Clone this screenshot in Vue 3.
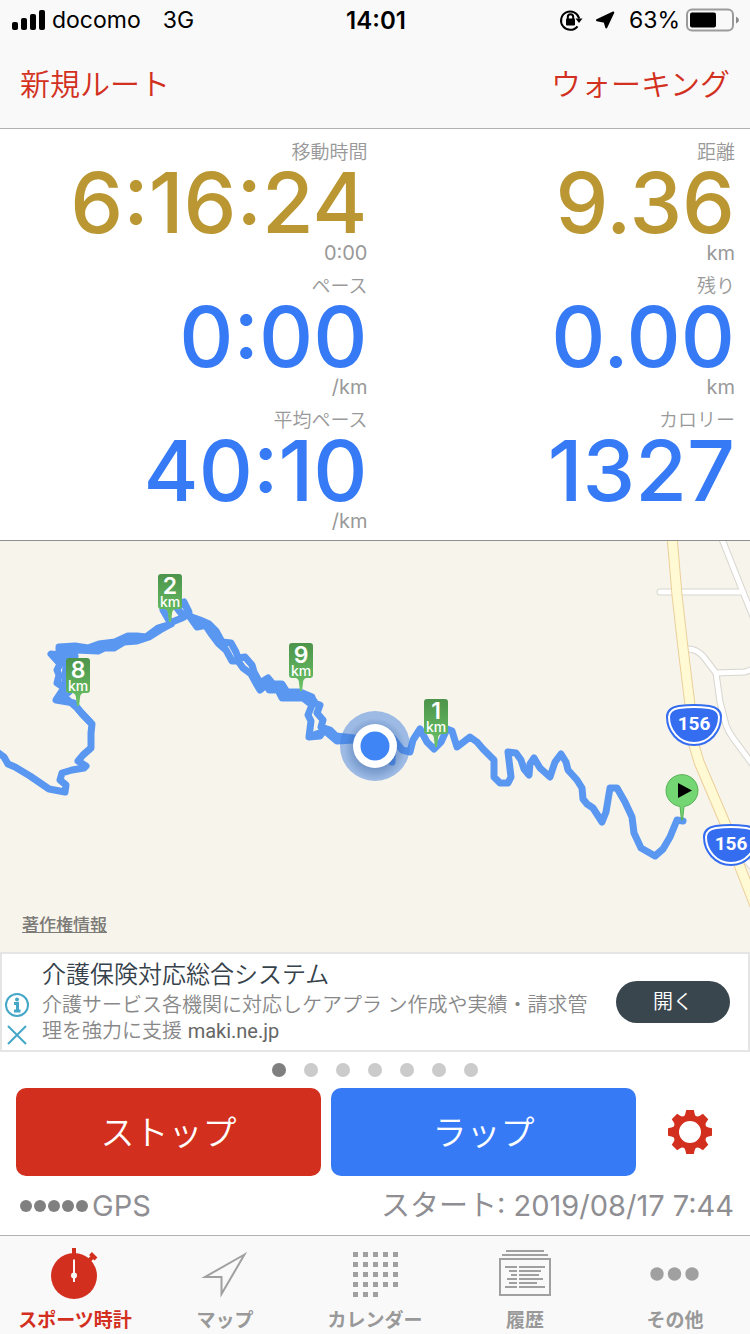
<template>
  <div class="workout-page">
    <header class="top-area">
      <div class="status-bar">
        <div class="status-left">
          <svg class="signal-icon" viewBox="0 0 34 20">
            <rect x="0" y="12" width="6" height="8" rx="2" />
            <rect x="9" y="8" width="6" height="12" rx="2" />
            <rect x="18" y="4" width="6" height="16" rx="2" />
            <rect x="27" y="0" width="6" height="20" rx="2" />
          </svg>
          <span>docomo</span>
          <span class="network">3G</span>
        </div>
        <div class="status-time">14:01</div>
        <div class="status-right">
          <svg class="lock-icon" viewBox="0 0 24 22">
            <path class="lock-ring" d="M18.5 17.3 A9.2 9.2 0 1 1 20.2 9.5" />
            <path d="M16.5 9.5 H23.5 L20 14 Z" />
            <rect x="7" y="9.5" width="9" height="7" rx="1" />
            <path class="lock-shackle" d="M8.8 10 V8 a2.7 2.7 0 0 1 5.4 0 V10" />
          </svg>
          <svg class="location-icon" viewBox="0 0 20 18">
            <path d="M18.3 1.5 L11.3 16.4 L9.6 10.7 L2 9.2 Z" />
          </svg>
          <span>63%</span>
          <svg class="battery-icon" viewBox="0 0 54 24">
            <rect class="battery-body" x="1" y="1.5" width="46" height="21" rx="5" />
            <rect x="4" y="4.5" width="26" height="15" rx="2" />
            <path class="battery-cap" d="M50 8.5 Q53 10 53 12 Q53 14 50 15.5 Z" />
          </svg>
        </div>
      </div>
      <nav class="nav-bar">
        <a href="#">新規ルート</a>
        <a href="#">ウォーキング</a>
      </nav>
    </header>

    <section class="metrics">
      <div v-for="item in metrics" :key="item.label" class="metric">
        <div class="metric-label">{{ item.label }}</div>
        <div :class="['metric-value', item.color]">{{ item.value }}</div>
        <div class="metric-unit">{{ item.unit }}</div>
      </div>
    </section>

    <section class="map-area">
      <svg class="map" viewBox="0 541 750 411">
        <defs>
          <linearGradient id="pinFill" x1="0" y1="0" x2="0" y2="1">
            <stop offset="0" stop-color="#4c944b" />
            <stop offset="1" stop-color="#6cc368" />
          </linearGradient>
          <radialGradient id="dotShadow">
            <stop offset="0.6" stop-color="#2f5b9c" stop-opacity="0.4" />
            <stop offset="1" stop-color="#2f5b9c" stop-opacity="0" />
          </radialGradient>
        </defs>

        <path v-for="(road, i) in sideRoads" :key="'a' + i" class="road-edge" :d="road" />
        <path v-for="(road, i) in sideRoads" :key="'b' + i" class="road" :d="road" />
        <path class="highway-edge" :d="highway" />
        <path class="highway" :d="highway" />

        <g v-for="shield in shields" :key="shield.y" :transform="`translate(${shield.x} ${shield.y})`">
          <path class="shield-outer" :d="shieldShape" />
          <path class="shield-inner" :d="shieldShape" />
          <text class="shield-text" y="5">156</text>
        </g>

        <path v-for="(line, i) in tracks" :key="'t' + i" class="track" :d="line" />

        <g v-for="pin in pins" :key="pin.km" :transform="`translate(${pin.x} ${pin.y})`">
          <path
            fill="url(#pinFill)"
            d="M-9 -48 H9 Q12 -48 12 -45 V-16 Q12 -13 9 -13 H5 Q2 -12 2 -8 L1 0 H-1 L-2 -8 Q-2 -12 -5 -13 H-9 Q-12 -13 -12 -16 V-45 Q-12 -48 -9 -48 Z"
          />
          <text class="pin-number" y="-28">{{ pin.km }}</text>
          <text class="pin-unit" y="-15">km</text>
        </g>

        <circle class="halo" cx="375" cy="746" r="35" />
        <circle cx="375" cy="749" r="31" fill="url(#dotShadow)" />
        <circle cx="375" cy="746" r="22" fill="#fff" />
        <circle cx="375" cy="746" r="14.5" fill="#4085f6" />

        <path class="start-pin" d="M680 806.5 A16 16 0 1 1 684 806.5 L682.5 820 H681.5 Z" />
        <path d="M678 783 L692 790.5 L678 798 Z" />
      </svg>
      <a class="map-credit" href="#">著作権情報</a>
    </section>

    <aside class="ad">
      <div class="ad-marks">
        <svg viewBox="0 0 24 24">
          <circle cx="12" cy="12" r="11" />
          <path class="info-stem" d="M9 10.5 H12.5 V18 M9 18 H15.5" />
          <circle class="info-dot" cx="12" cy="6.5" r="2" />
        </svg>
        <svg viewBox="0 0 24 24">
          <path d="M3 3 L21 21 M21 3 L3 21" />
        </svg>
      </div>
      <div class="ad-text">
        <div class="ad-title">介護保険対応総合システム</div>
        <div class="ad-desc">
          介護サービス各機関に対応しケアプラ ン作成や実績・請求管<br />理を強力に支援 <span class="ad-host">maki.ne.jp</span>
        </div>
      </div>
      <button class="ad-button" type="button">開く</button>
    </aside>

    <div class="page-dots">
      <span v-for="n in 7" :key="n" :class="['page-dot', { active: n === 1 }]"></span>
    </div>

    <div class="controls">
      <button class="control-button stop" type="button">ストップ</button>
      <button class="control-button lap" type="button">ラップ</button>
      <button class="settings-button" type="button" aria-label="設定">
        <svg viewBox="-22 -22 44 44">
          <circle class="gear-ring" r="14" />
          <path
            v-for="n in 8"
            :key="n"
            d="M-6.5 -15 Q-5 -16.5 -4.6 -18.5 L-3.8 -22 H3.8 L4.6 -18.5 Q5 -16.5 6.5 -15 Z"
            :transform="`rotate(${n * 45})`"
          />
        </svg>
      </button>
    </div>

    <div class="info-row">
      <div class="gps">
        <div class="gps-dots">
          <span v-for="n in 5" :key="n" class="gps-dot"></span>
        </div>
        <span>GPS</span>
      </div>
      <div>スタート: 2019/08/17 7:44</div>
    </div>

    <nav class="tab-bar">
      <a class="tab active" href="#">
        <svg class="tab-icon" viewBox="0 0 60 52">
          <circle cx="29" cy="28" r="23" />
          <rect x="27" y="0" width="4" height="6" />
          <path class="watch-button" d="M44 12.5 L48 8.5 M45.5 5.5 L51 11" />
          <path class="watch-hand" d="M29 11.5 V34" />
          <circle class="watch-hub" cx="29" cy="27.5" r="3" />
        </svg>
        <span>スポーツ時計</span>
      </a>
      <a class="tab" href="#">
        <svg class="tab-icon outline" viewBox="0 0 60 52">
          <path d="M49.5 6.5 L10 29 H26.5 V46 Z" />
        </svg>
        <span>マップ</span>
      </a>
      <a class="tab" href="#">
        <svg class="tab-icon" viewBox="0 0 60 52">
          <rect
            v-for="n in 23"
            :key="n"
            :x="8 + ((n - 1) % 5) * 10"
            :y="4 + Math.floor((n - 1) / 5) * 10"
            width="5"
            height="5"
          />
        </svg>
        <span>カレンダー</span>
      </a>
      <a class="tab" href="#">
        <svg class="tab-icon outline" viewBox="0 0 60 52">
          <rect x="5" y="11" width="50" height="36" />
          <path
            d="M11 3 H49 M7 7 H53 M10 19 H22 M24 19 H50 M14 23 H22 M24 23 H46 M16 27 H22 M24 27 H44 M12 31 H22 M24 31 H48 M14 35 H22 M24 35 H42 M10 39 H22 M24 39 H50"
          />
        </svg>
        <span>履歴</span>
      </a>
      <a class="tab" href="#">
        <svg class="tab-icon" viewBox="0 0 60 52">
          <circle cx="12" cy="26" r="6.7" />
          <circle cx="29.5" cy="26" r="6.7" />
          <circle cx="47" cy="26" r="6.7" />
        </svg>
        <span>その他</span>
      </a>
    </nav>
  </div>
</template>

<script setup>
const metrics = [
  { label: '移動時間', value: '6:16:24', unit: '0:00', color: 'gold' },
  { label: '距離', value: '9.36', unit: 'km', color: 'gold' },
  { label: 'ペース', value: '0:00', unit: '/km', color: 'blue' },
  { label: '残り', value: '0.00', unit: 'km', color: 'blue' },
  { label: '平均ペース', value: '40:10', unit: '/km', color: 'blue' },
  { label: 'カロリー', value: '1327', unit: '', color: 'blue' }
]

const pins = [
  { km: 2, x: 170, y: 622 },
  { km: 8, x: 78, y: 706 },
  { km: 9, x: 301, y: 691 },
  { km: 1, x: 436, y: 747 }
]

const shields = [
  { x: 694, y: 725 },
  { x: 731, y: 845 }
]

const shieldShape =
  'M0 18 C-15 18 -25 5 -25 -8 C-25 -14 -21 -16 -15 -17 Q0 -19 15 -17 C21 -16 25 -14 25 -8 C25 5 15 18 0 18 Z'

const highway = 'M672 536 L677 595 L683 648 L690 705 L694 745 L699 762 L725 823 L738 862 L756 908'

const sideRoads = [
  'M720 534 L743 592 L756 624',
  'M660 592 H743',
  'M687 649 Q695 648 703 656 L716 673 L745 672 L756 668',
  'M716 673 L720 702 L726 725 Q728 731 733 738 L756 769',
  'M738 852 L756 871'
]

// outbound and return legs overlap, so the route is kept as several lines
const tracks = [
  'M-4 751 L4 757 L8 764 L15 767 L30 776 L49 789 L65 792 L66 785 L60 780 L62 773 L72 770 L84 768 L86 766 L78 761 L83 755 L91 748 L91 733 L92 724 L82 714 L74 703 L56 700 L64 688 L57 683 L59 675 L57 670 L60 664 L51 654 L59 655 L75 656 L74 664',
  'M90 722 L77 708 L68 700 L62 697 L69 692 L67 664 L60 658 M64 692 L66 665',
  'M59 656 L59 647 L75 646 L88 648 L99 644 L115 642 L128 636 L137 636 L146 637 L158 628 L171 624 L163 610',
  'M60 652 L76 650 L98 651 L104 648 L114 648 L124 642 L137 641 L149 637 L160 630 L171 624',
  'M172 622 L182 618 L189 612 L184 602 L177 608 L184 617 M184 602 L190 617 L197 627 L207 625 L212 632',
  'M186 615 L200 620 L209 624 L216 631 L222 642 L231 643 L236 652 L238 658 L245 657 L252 665 L254 672 L260 683 L268 678 L273 684 L282 684 L287 692 L300 692 L312 697 L314 703 L320 705 L317 713 L323 720 L321 727 L330 730 L336 736 L354 738 L380 740',
  'M204 623 L212 635 L218 643 L226 650 L232 661 L238 661 L243 668 L251 674 L257 685 L260 690 L267 684 L269 690 L278 690 L282 698 L297 698 L303 698 L312 705 L308 715 L311 721 L309 737 L320 736 L324 730 L337 741 L354 740',
  'M212 628 L220 642 L224 646 M256 678 L264 686 M272 687 L284 691 M284 695 L304 695 L314 701 M316 734 L326 731 L340 739',
  'M392 762 L393 738 L402 750 L410 752 L413 740 L420 729 L427 742 L434 749 L441 742 L447 729 L452 731 L457 747 L470 737 L477 742 L483 749 L494 760 L494 777 L500 783 L508 783 L511 777 L508 752 L516 753 L521 760 L524 769 L529 775 L530 764 L534 758 L540 768 L550 777 L555 762 L561 754 L566 762 L568 770 L577 780 L582 788 L583 799 L587 804 L593 808 L602 822 L606 812 L610 788 L617 788 L625 802 L632 817 L634 833 L641 848 L655 856 L663 849 L670 837 L677 820 L683 821'
]
</script>

<style>
body {
  background: #fff;
}
</style>

<style scoped>
.workout-page {
  display: flex;
  flex-direction: column;
  min-height: 100vh;
  font-family: Inter, "Noto Sans CJK JP", sans-serif;
  background: #fff;
}

a {
  color: inherit;
  text-decoration: none;
}

button {
  padding: 0;
  border: 0;
  font-family: inherit;
  cursor: pointer;
}

.top-area {
  background: #f9f9f9;
  border-bottom: 1px solid #b2b2b2;
}

.status-bar {
  display: grid;
  grid-template-columns: 1fr auto 1fr;
  align-items: center;
  height: 40px;
  padding: 0 10px 0 12px;
  font-size: 23px;
  color: #000;
}

.status-left,
.status-right {
  display: flex;
  align-items: center;
}

.status-right {
  justify-content: flex-end;
}

.status-time {
  font-size: 24px;
  font-weight: 600;
}

.signal-icon {
  width: 34px;
  height: 20px;
  margin-right: 6px;
}

.network {
  margin-left: 22px;
}

.lock-icon {
  width: 24px;
  height: 22px;
  margin-right: 12px;
}

.lock-ring,
.lock-shackle {
  fill: none;
  stroke: #000;
  stroke-width: 2;
}

.location-icon {
  width: 20px;
  height: 18px;
  margin-right: 14px;
  stroke: #000;
  stroke-width: 2;
  stroke-linejoin: round;
}

.battery-icon {
  width: 54px;
  height: 24px;
  margin-left: 6px;
}

.battery-body {
  fill: none;
  stroke: #9b9b9b;
  stroke-width: 2;
}

.battery-cap {
  fill: #8a8a8a;
}

.nav-bar {
  display: flex;
  align-items: center;
  justify-content: space-between;
  height: 84px;
  padding: 0 20px 4px;
  font-size: 30px;
  font-weight: 350;
  color: #d23020;
}

.metrics {
  display: grid;
  grid-template-columns: 1fr 1fr;
  row-gap: 14px;
  padding: 14px 15px 9px 0;
  text-align: right;
  border-bottom: 1px solid #8e8e8e;
}

.metric-label,
.metric-unit {
  height: 20px;
  line-height: 20px;
  color: #999;
}

.metric-label {
  font-size: 19px;
  font-weight: 350;
}

.metric-unit {
  font-size: 20px;
  font-weight: 400;
}

.metric-value {
  height: 80px;
  line-height: 80px;
  font-size: 84px;
  font-weight: 500;
}

.metric-value.gold {
  color: #ba9733;
}

.metric-value.blue {
  color: #367af6;
}

.map-area {
  position: relative;
  background: #f7f4ec;
}

.map {
  display: block;
  width: 100%;
}

.road-edge,
.road,
.highway-edge,
.highway,
.track {
  fill: none;
  stroke-linecap: round;
  stroke-linejoin: round;
}

.road-edge {
  stroke: #d8d5cf;
  stroke-width: 7;
}

.road {
  stroke: #fff;
  stroke-width: 5;
}

.highway-edge {
  stroke: #ebcf9a;
  stroke-width: 11;
}

.highway {
  stroke: #fffad3;
  stroke-width: 9;
}

.track {
  stroke: #5a97f1;
  stroke-width: 7;
}

.shield-outer {
  fill: #356df0;
  stroke: #356df0;
  stroke-width: 6;
}

.shield-inner {
  fill: #356df0;
  stroke: #fff;
  stroke-width: 2;
}

.shield-text,
.pin-number,
.pin-unit {
  fill: #fff;
  text-anchor: middle;
}

.shield-text {
  font-family: Roboto, sans-serif;
  font-size: 19px;
  font-weight: 700;
}

.pin-number {
  font-size: 23px;
  font-weight: 600;
}

.pin-unit {
  font-size: 14px;
  font-weight: 500;
}

.halo {
  fill: #4280dc;
  fill-opacity: 0.5;
}

.start-pin {
  fill: #74d672;
  stroke: #55b156;
}

.map-credit {
  position: absolute;
  left: 22px;
  bottom: 15px;
  font-size: 17px;
  line-height: 24px;
  font-weight: 500;
  color: #7c7a76;
  text-decoration: underline;
}

.ad {
  display: flex;
  align-items: center;
  height: 96px;
  padding-right: 18px;
  background: #fff;
  border: 2px solid #e5e5e5;
}

.ad-marks {
  display: flex;
  flex-direction: column;
  gap: 6px;
  align-self: flex-end;
  padding: 0 13px 3px 3px;
}

.ad-marks svg {
  width: 24px;
  height: 24px;
  fill: none;
  stroke: #45a7c8;
  stroke-width: 2;
}

.ad-marks .info-stem {
  stroke-width: 3;
}

.ad-marks .info-dot {
  fill: #45a7c8;
  stroke: none;
}

.ad-text {
  flex: 1;
  padding-bottom: 2px;
}

.ad-title {
  font-size: 24px;
  line-height: 34px;
  font-weight: 350;
  color: #36424b;
}

.ad-desc {
  font-size: 20px;
  line-height: 26px;
  font-weight: 350;
  color: #888;
}

.ad-host {
  font-family: Roboto, sans-serif;
  font-weight: 400;
  color: #666;
}

.ad-button {
  width: 114px;
  height: 42px;
  padding-bottom: 4px;
  font-size: 20px;
  font-weight: 350;
  color: #fff;
  background: #3a464e;
  border-radius: 21px;
}

.page-dots {
  display: flex;
  align-items: center;
  justify-content: center;
  gap: 18px;
  height: 36px;
}

.page-dot {
  width: 14px;
  height: 14px;
  border-radius: 50%;
  background: #cbcbcb;
}

.page-dot.active {
  background: #7f7f7f;
}

.controls {
  display: flex;
  gap: 10px;
  padding: 0 16px;
}

.control-button {
  flex: 1;
  height: 88px;
  padding-bottom: 4px;
  font-size: 34px;
  font-weight: 350;
  color: #fff;
  border-radius: 10px;
}

.control-button.stop {
  background: #d32f1f;
}

.control-button.lap {
  background: #367af6;
}

.settings-button {
  display: flex;
  align-items: center;
  justify-content: center;
  width: 88px;
  height: 88px;
  background: none;
}

.settings-button svg {
  width: 44px;
  height: 44px;
  fill: #d32f1f;
}

.settings-button .gear-ring {
  fill: none;
  stroke: #d32f1f;
  stroke-width: 6;
}

.info-row {
  flex: 1;
  display: flex;
  align-items: center;
  justify-content: space-between;
  min-height: 59px;
  padding: 0 16px 0 20px;
  font-size: 29px;
  line-height: 40px;
  font-weight: 400;
  color: #8e8e93;
}

.gps {
  display: flex;
  align-items: center;
  gap: 4px;
}

.gps-dots {
  display: flex;
  gap: 2px;
}

.gps-dot {
  width: 12px;
  height: 12px;
  border-radius: 50%;
  background: #808080;
}

.tab-bar {
  display: grid;
  grid-template-columns: repeat(5, 1fr);
  padding: 12px 0 1px;
  background: #f9f9f9;
  border-top: 1px solid #b2b2b2;
}

.tab {
  display: flex;
  flex-direction: column;
  align-items: center;
  gap: 9px;
  font-size: 19px;
  line-height: 24px;
  font-weight: 700;
  color: #999;
}

.tab.active {
  color: #d32f1f;
}

.tab-icon {
  width: 60px;
  height: 52px;
  fill: #a0a0a0;
}

.tab.active .tab-icon {
  fill: #d32f1f;
}

.tab-icon.outline {
  fill: none;
  stroke: #a0a0a0;
  stroke-width: 2;
}

.watch-button {
  fill: none;
  stroke: #d32f1f;
  stroke-width: 4;
}

.watch-hand {
  stroke: #f9f9f9;
  stroke-width: 2;
}

.watch-hub {
  fill: #f9f9f9;
}
</style>
